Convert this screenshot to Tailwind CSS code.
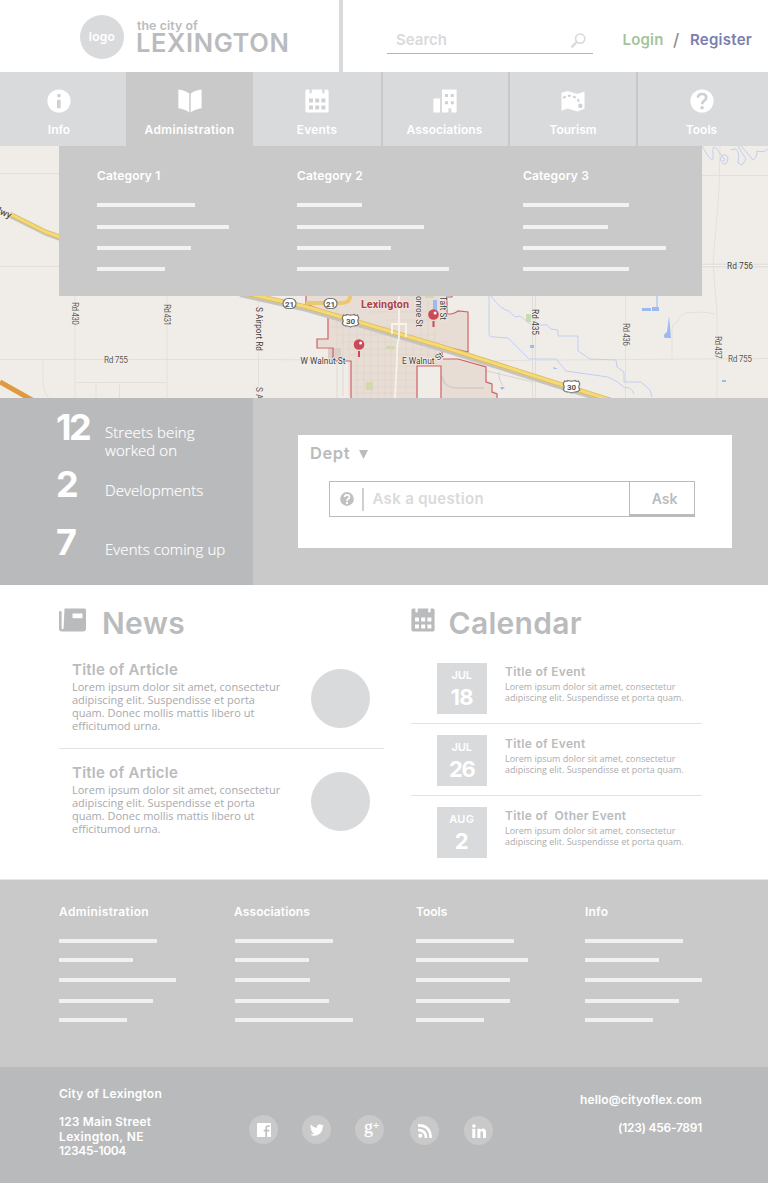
<!DOCTYPE html>
<html lang="en">
<head>
<meta charset="utf-8">
<title>City of Lexington</title>
<script src="https://cdn.jsdelivr.net/npm/@tailwindcss/browser@4"></script>
</head>
<body class="w-[768px] bg-white font-['Inter','Liberation_Sans',sans-serif] font-semibold text-[#babbbd]">

<header class="flex h-[72px] w-[768px]">
  <div class="flex w-[343px] border-r-4 border-[#d9dadc] pl-20 pt-[15px]">
    <div class="flex size-11 items-center justify-center rounded-full bg-[#d9dadc] pb-px text-[12px] tracking-[.25px] text-white">logo</div>
    <div class="ml-[13px]">
      <div class="mt-1 h-3.5 text-[12.3px] leading-[14px] tracking-[.1px]">the city of</div>
      <div class="-ml-px h-[22px] text-[25.5px] leading-[20px] tracking-[.6px]">LEXINGTON</div>
    </div>
  </div>
  <div class="ml-11 mt-[26px] flex h-7 w-[206px] items-center justify-between border-b border-[#b5b6b8] pl-[9px] pr-[7px] pt-0.5 text-[15px] text-[#d9dadc]">
    <span>Search</span>
    <svg class="size-[15px]" viewBox="0 0 15 15" fill="none" stroke="currentColor"><circle cx="9.2" cy="5.6" r="4.6" stroke-width="1.6"/><path d="M5.6 9.2L1.2 13.6" stroke-width="2.4" stroke-linecap="round"/></svg>
  </div>
  <div class="ml-[29.5px] flex pt-[30px] text-[15px] leading-5">
    <span class="w-[50.5px] tracking-[.2px] text-[#a3c49b]">Login</span>
    <span class="w-[17px] text-[17px] font-medium text-[#8f8f91]">/</span>
    <span class="tracking-[.25px] text-[#7a7eae]">Register</span>
  </div>
</header>

<nav class="grid h-[74px] grid-cols-[126px_127px_130px_127px_128px_130px] text-center text-[12px] leading-4 text-white">
  <a class="flex flex-col items-center gap-[9px] bg-[#d9dadc] pr-2 pt-[17px]">
    <svg class="size-6" viewBox="0 0 24 24"><circle cx="12" cy="12" r="11.6" fill="#fff"/><circle cx="12" cy="6.6" r="1.9" fill="#d0d1d3"/><path d="M10 10.8h3.7v8.4H10z" fill="#d0d1d3"/></svg>
    <span>Info</span>
  </a>
  <a class="flex flex-col items-center gap-[9px] bg-[#c9c9c9] pt-[17px]">
    <svg class="size-6" viewBox="0 0 24 24" fill="#fff"><path d="M.4.4C4 .8 8.400 2 11.300 4.400v19.200C8.400 21 4 19.900.4 19.300zM23.600.4C20 .8 15.600 2 12.700 4.400v19.200c2.900-2.600 7.300-3.700 10.900-4.300z"/></svg>
    <span class="tracking-[.37px]">Administration</span>
  </a>
  <a class="flex flex-col items-center gap-[9px] border-r-2 border-[#c8c8ca] bg-[#d9dadc] pt-[17px]">
    <svg class="size-6" viewBox="0 0 24 24"><path d="M2 .6h2.400v2.600q0 1.200 1.200 1.200T6.800 3.200V.6h10.400v2.600q0 1.200 1.200 1.200t1.200-1.200V.6H22q1.600 0 1.600 1.600v19.600q0 1.600-1.600 1.600H2Q.4 23.400.4 21.800V2.200Q.4.600 2 .6z" fill="#fff"/><path d="M4 9.500h4v4H4zm6.200 0h4v4h-4zm6.200 0h4v4h-4zM4 16.500h4v4H4zm6.200 0h4v4h-4zm6.200 0h4v4h-4z" fill="#d0d1d3"/></svg>
    <span class="tracking-[.2px]">Events</span>
  </a>
  <a class="flex flex-col items-center gap-[9px] border-r-2 border-[#c8c8ca] bg-[#d9dadc] pr-0.5 pt-[17px]">
    <svg class="size-6" viewBox="0 0 24 24"><path d="M.4 9.500h6.600v14H.4zM9 .5h14.600v23h-5.200v-4.200h-3v4.200H9z" fill="#fff"/><path d="M12 5h3v3h-3zm5.800 0h3v3h-3zM12 12.300h3v3h-3zm5.800 0h3v3h-3z" fill="#d0d1d3"/></svg>
    <span class="tracking-[.1px]">Associations</span>
  </a>
  <a class="flex flex-col items-center gap-[9px] border-r-2 border-[#c8c8ca] bg-[#d9dadc] pt-[17px]">
    <svg class="size-6" viewBox="0 0 24 24"><path d="M.5 3.800L6.500 2l10 3 7-2.600v17.400l-7 2.700-10-2.900-6 2.200z" fill="#fff"/><path d="M2 9q6-4 12-.7 4.500 2.700 5 8" fill="none" stroke="#cfd0d2" stroke-width="2" stroke-dasharray="3 2.200"/><circle cx="19.400" cy="16.900" r="2.200" fill="#cfd0d2"/></svg>
    <span>Tourism</span>
  </a>
  <a class="flex flex-col items-center gap-[9px] bg-[#d9dadc] pr-[3px] pt-[17px]">
    <svg class="size-6" viewBox="0 0 24 24"><circle cx="12" cy="12" r="11.600" fill="#fff"/><path d="M8 8.700Q8 5 12.200 5q4 0 4 3.600 0 2-2.300 3.400-1.700 1-1.700 3.300" fill="none" stroke="#cfd0d2" stroke-width="2.700"/><circle cx="12.100" cy="18.700" r="1.800" fill="#cfd0d2"/></svg>
    <span>Tools</span>
  </a>
</nav>

<section class="relative h-[252px]">
  <svg class="block h-[252px] w-[768px]" viewBox="0 146 768 252" font-family="Roboto, sans-serif" font-weight="400">
    <rect y="146" width="768" height="252" fill="#f0ede8"/>
    <!-- minor roads -->
    <g fill="none" stroke="#e3e0da">
      <path d="M0 173.500H60M0 266.500H60M0 359.500H260L500 361M700 175.500H768M500 360.500L768 358.500M75 290v108M167 290v108M258.500 290v108M75 382.500h92M43 360v22q1 12 6 16M96 383v15M119.500 384v14M625.500 290v108M720 146l-1 45-6 72 4 50v85M672 360v-30q0-6 5-8 2-6 8-9 18-2 30 1"/>
    </g>
    <path d="M700 265.500h68M534 290v108" fill="none" stroke="#dcd9d4" stroke-width="3.500"/>
    <path d="M700 265.500h68M534 290v108" fill="none" stroke="#f4f2ee" stroke-width="1.500"/>
    <!-- city area -->
    <path d="M306 290V304L328 313V339H317V347H333V357L336 360H351V398H417V366H441V398H497V392L491 390V382L486 380V366L460 359H443V347L467 353V313L457 311Q450 315 447 314V290z" fill="#e8ddd5"/>
    <g stroke="#ded1c9" stroke-width=".7" fill="none">
      <path d="M337 300v98M343 312v84M349 318v78M357 320v78M364 322v76M371 324v74M378 326v72M385 328v70M391 330v66M406 330v60M413 333v30M421 300v60M428 300v62M435 300v65M330 327h65M334 335h102M340 342h110M345 349h96M350 355h90M355 366h60M355 373h60M355 380h60M355 387h60M355 393h60M370 312h70M385 320h50"/>
    </g>
    <path d="M328 348h13v11h-13z" fill="#d9cfc7"/>
    <path d="M366 382h7v8h-7zM386 346h9v3h-9zM425 295h9v3h-9z" fill="#d2d9b0"/>
    <path d="M526 314h5v8h-5z" fill="#c9dcb0"/>
    <path d="M442 376q2 12 15 12h27" fill="none" stroke="#d3cac5" stroke-width="1.500"/>
    <path d="M487 371l46 11M499 372q-1 8 4 14" fill="none" stroke="#d6d2cc"/>
    <!-- water -->
    <g fill="none" stroke="#c4cdf2">
      <path d="M489 290v44q0 3 5 3l14 1 21 21h27l10 12 42 6q10 4 17 11 6-2 9 6M491 296q10 14 18 15l6 6 5-1 12 9h15l4 4 7 1v6h20v15l12 8 26 1 1 7 7 5v10h17l9 8 2 7"/>
      <path d="M702 146l6 10q6 8 5-1-1-11 3-7l9 12q-6 4-4-3 5-5 7 1-1 9-6 5M731 150q10-5 7 13l4 2 4-6-7-11q-2-6 4 0l10 12q4-2 4-9 7 2 11-2"/>
    </g>
    <path d="M642 308h9v3h-9zm10-1h7v4h-7zm4.500-12h1v15h-1zM669 316l2 22h-6q-3-3 2-6zM530 345h4v3h-4zM553 367l5 2h-4zM500 387h5l-3 3zM722 380h4v2h-4zM433 300h4v14h-4z" fill="#9cb9f2"/>
    <!-- city limits -->
    <path d="M306 290v14l22 9v26h-11v9h16v10l3 3h15v37M447 290v7h5v-2M447 297v17h4q5-1 7-3l10 1v40l-26-6v12M417 398v-32h24v32M443 359h15l28 8v15l6 2v8l5 2v6" fill="none" stroke="#cf6064" stroke-width="1.200"/>
    <!-- highways -->
    <path d="M10 216l36 18 20 7M240 295l67 15 133 39 110 35 70 22" fill="none" stroke="#c6c4c0" stroke-width="4"/>
    <path d="M306 303h30q14 1 14-6v-7" fill="none" stroke="#eac873" stroke-width="4"/>
    <path d="M10 214l36 18 20 7M240 292l67 15 133 39 110 35 70 22" fill="none" stroke="#dcbb59" stroke-width="4.600"/>
    <path d="M10 214l36 18 20 7M240 292l67 15 133 39 110 35 70 22" fill="none" stroke="#f5d977" stroke-width="3"/>
    <path d="M0 382l32 18" fill="none" stroke="#df9a3f" stroke-width="5"/>
    <path d="M399 290v48q-2 4-2 20l-2 40M392 334v-10h14v13" fill="none" stroke="#f7f3ef" stroke-width="1.800"/>
    <!-- route shields -->
    <g fill="#fff" stroke="#777" stroke-width="1.200">
      <rect x="283" y="298.500" width="13" height="10" rx="5"/>
      <rect x="324" y="298.500" width="13" height="10" rx="5"/>
      <path id="shield" d="M343.500 315q2.200 1 3.500-.5 3.500 1.300 7 0 1.300 1.500 3.500.5l1.300 3q-2 3 0 5.500-1.300 2.500-5 2.500-2 .2-3.300 1-1.300-.8-3.300-1-3.700 0-5-2.500 2-2.500 0-5.500z"/>
      <use href="#shield" x="221" y="66"/>
    </g>
    <g font-size="8" fill="#555" text-anchor="middle" font-weight="700">
      <text x="289.600" y="306.500">21</text><text x="330.500" y="306.500">21</text><text x="350.500" y="323.700">30</text><text x="571.500" y="389.700">30</text>
    </g>
    <!-- labels -->
    <g font-size="8.300" fill="#5c5956" stroke="#f5f2ee" stroke-width="1.200" paint-order="stroke">
      <text x="104" y="362.500" textLength="24">Rd 755</text>
      <text x="727" y="268.500" textLength="26" fill="#3e3c39">Rd 756</text>
      <text x="728" y="362" textLength="24">Rd 755</text>
      <text x="300.500" y="364" textLength="45" fill="#3e3c39">W Walnut St</text>
      <text x="402" y="364" textLength="32.500" fill="#3e3c39">E Walnut</text>
      <text transform="translate(438 361) rotate(-40)" fill="#3e3c39">St</text>
      <text transform="translate(72 302) rotate(90)" textLength="23">Rd 430</text>
      <text transform="translate(164 304) rotate(90)" textLength="22">Rd 431</text>
      <text transform="translate(255.500 307) rotate(90)" textLength="44" fill="#3e3c39">S Airport Rd</text>
      <text transform="translate(255.500 387) rotate(90)">S A</text>
      <text transform="translate(531.500 309) rotate(90)" textLength="26" fill="#3e3c39">Rd 435</text>
      <text transform="translate(623 323) rotate(90)" textLength="23">Rd 436</text>
      <text transform="translate(714.500 336) rotate(90)" textLength="23">Rd 437</text>
      <text transform="translate(416 296) rotate(90)" textLength="31" fill="#3e3c39">onroe St</text>
      <text transform="translate(439.500 296) rotate(90)" textLength="24" fill="#3e3c39">Taft St</text>
      <text transform="translate(-3 213) rotate(24)" fill="#5e4a2a" font-size="9.500" font-weight="500">lwy</text>
    </g>
    <text x="361" y="308" font-size="10.800" font-weight="700" fill="#ac4248" textLength="48" stroke="#f3e8e2" stroke-width="1.500" paint-order="stroke">Lexington</text>
    <!-- pins -->
    <g fill="#ca4b55"><circle cx="359" cy="344.500" r="5.300"/><path d="M358 351h2v6h-2z"/><circle cx="433.500" cy="314.500" r="5.300"/><path d="M432.500 321h2v6h-2z"/></g>
    <g fill="#fff"><circle cx="360.600" cy="343" r="1.500"/><circle cx="435.100" cy="313" r="1.500"/></g>
  </svg>

  <div class="absolute left-[59px] top-0 flex h-[150px] w-[643px] bg-[#c9c9c9] pl-[38px] pt-[22px] text-[12px] leading-4 tracking-[.15px] text-white">
    <div class="w-[200px]">
      <div>Category 1</div>
      <div class="mt-[19px] h-1 w-[98px] bg-[#f2f2f2]"></div>
      <div class="mt-[18px] h-1 w-[132px] bg-[#f2f2f2]"></div>
      <div class="mt-[17px] h-1 w-[94px] bg-[#f2f2f2]"></div>
      <div class="mt-[17px] h-1 w-[68px] bg-[#f2f2f2]"></div>
    </div>
    <div class="w-[226px]">
      <div>Category 2</div>
      <div class="mt-[19px] h-1 w-[65px] bg-[#f2f2f2]"></div>
      <div class="mt-[18px] h-1 w-[127px] bg-[#f2f2f2]"></div>
      <div class="mt-[17px] h-1 w-[94px] bg-[#f2f2f2]"></div>
      <div class="mt-[17px] h-1 w-[152px] bg-[#f2f2f2]"></div>
    </div>
    <div>
      <div>Category 3</div>
      <div class="mt-[19px] h-1 w-[106px] bg-[#f2f2f2]"></div>
      <div class="mt-[18px] h-1 w-[85px] bg-[#f2f2f2]"></div>
      <div class="mt-[17px] h-1 w-[143px] bg-[#f2f2f2]"></div>
      <div class="mt-[17px] h-1 w-[106px] bg-[#f2f2f2]"></div>
    </div>
  </div>
</section>

<section class="flex h-[187px] bg-[#c9c9c9]">
  <div class="w-[253px] bg-[#b9babc] pl-14 text-white">
    <div class="flex h-[68px] pt-[13px]">
      <div class="w-[49px] text-[36px] font-bold leading-8 tracking-[-2.500px]">12</div>
      <div class="pt-[12px] font-['Open_Sans'] text-[15px] font-light leading-[18px] tracking-[.08px] [-webkit-text-stroke:.2px_white]">Streets being<br>worked on</div>
    </div>
    <div class="flex h-[58px] pt-[2px]">
      <div class="w-[49px] text-[36px] font-bold leading-8">2</div>
      <div class="pt-[13px] font-['Open_Sans'] text-[15px] font-light leading-[18px] tracking-[.08px] [-webkit-text-stroke:.2px_white]">Developments</div>
    </div>
    <div class="flex pt-[2px]">
      <div class="w-[49px] text-[36px] font-bold leading-8">7</div>
      <div class="pt-[14px] font-['Open_Sans'] text-[15px] font-light leading-[18px] tracking-[.08px] [-webkit-text-stroke:.2px_white]">Events coming up</div>
    </div>
  </div>
  <div class="ml-[45px] mt-[37px] h-[113px] w-[434px] bg-white pl-3 pt-2">
    <div class="flex h-5 items-center gap-[9px] text-[16.500px] tracking-[.6px]">Dept
      <svg class="mt-0.5 h-[9px] w-[9px]" viewBox="0 0 8 8"><path d="M0 0h8L4 8z" fill="#babbbd"/></svg>
    </div>
    <div class="ml-[19px] mt-[18px] flex h-9 w-[366px] border border-[#babbbd] text-[15px]">
      <div class="flex w-[299px] items-center pl-2.5">
        <svg class="size-[14px]" viewBox="0 0 24 24"><circle cx="12" cy="12" r="11.800" fill="#c0c0c2"/><path d="M8 8.700Q8 5 12.200 5q4 0 4 3.600 0 2-2.300 3.400-1.700 1-1.700 3.300" fill="none" stroke="#fff" stroke-width="3"/><circle cx="12.100" cy="18.700" r="2" fill="#fff"/></svg>
        <div class="ml-2 h-[23px] w-[1.500px] bg-[#cfd0d2]"></div>
        <span class="ml-[9px] tracking-[.32px] text-[#d9dadc]">Ask a question</span>
      </div>
      <div class="flex flex-1 items-center justify-center border-b-2 border-l border-[#babbbd] pl-[5px] pt-px text-[14px]">Ask</div>
    </div>
  </div>
</section>

<section class="flex h-[294px] pl-[59px]">
  <div class="w-[325px]">
    <div class="flex h-[70px] pt-[23px]">
      <svg class="h-6 w-[27px]" viewBox="0 0 27 24"><path d="M5.500.5h20q1.500 0 1.500 1.500v18.500q0 3-3 3H3q-3 0-3-3V4q0-1 1.300-1t1.300 1v16q0 1.200 1 1.200t1-1.200z" fill="#babbbd"/><path d="M13.500 5.500h10v4.700h-10z" fill="#fff"/></svg>
      <h2 class="ml-4 h-7 text-[30px] leading-[30px] tracking-[.3px]">News</h2>
    </div>
    <article class="flex h-[94px] border-b border-[#e2e3e4] pl-[13px] pt-[6px]">
      <div class="w-[238.500px]">
        <h3 class="h-[19px] text-[15px] leading-[18px] tracking-[.23px]">Title of Article</h3>
        <p class="font-['Open_Sans'] text-[11px] font-normal leading-[13px] text-[#a9a9ab]">Lorem ipsum dolor sit amet, consectetur<br>adipiscing elit. Suspendisse et porta<br>quam. Donec mollis mattis libero ut<br>efficitumod urna.</p>
      </div>
      <div class="mt-2 size-[59px] rounded-full bg-[#d9dadc]"></div>
    </article>
    <article class="flex pl-[13px] pt-[15px]">
      <div class="w-[238.500px]">
        <h3 class="h-[19px] text-[15px] leading-[18px] tracking-[.23px]">Title of Article</h3>
        <p class="font-['Open_Sans'] text-[11px] font-normal leading-[13px] text-[#a9a9ab]">Lorem ipsum dolor sit amet, consectetur<br>adipiscing elit. Suspendisse et porta<br>quam. Donec mollis mattis libero ut<br>efficitumod urna.</p>
      </div>
      <div class="mt-2 size-[59px] rounded-full bg-[#d9dadc]"></div>
    </article>
  </div>

  <div class="ml-[26.500px] w-[291.500px]">
    <div class="flex h-[67px] pt-[23px]">
      <svg class="size-6" viewBox="0 0 24 24"><path d="M2 .6h2.400v2.600q0 1.200 1.200 1.200T6.800 3.200V.6h10.400v2.600q0 1.200 1.200 1.200t1.200-1.200V.6H22q1.600 0 1.600 1.600v19.600q0 1.600-1.600 1.600H2Q.4 23.400.4 21.800V2.200Q.4.600 2 .6z" fill="#babbbd"/><path d="M4 9.500h4v4H4zm6.200 0h4v4h-4zm6.200 0h4v4h-4zM4 16.500h4v4H4zm6.200 0h4v4h-4zm6.200 0h4v4h-4z" fill="#fff"/></svg>
      <h2 class="ml-[14px] h-7 text-[30px] leading-[30px] tracking-[.3px]">Calendar</h2>
    </div>
    <article class="flex h-[72px] border-b border-[#e2e3e4] pl-[26px] pt-[11px]">
      <div class="size-[50.500px] bg-[#d9dadc] pt-[5px] text-center text-white">
        <div class="text-[11px] leading-[14px]">JUL</div>
        <div class="mt-[3px] text-[22px] font-bold leading-6 tracking-[-.7px]">18</div>
      </div>
      <div class="ml-[18px] pt-px">
        <h3 class="h-[18px] text-[12px] leading-4 tracking-[.3px]">Title of Event</h3>
        <p class="-mt-px font-['Open_Sans'] text-[9px] font-normal leading-[11px] text-[#acacae]">Lorem ipsum dolor sit amet, consectetur<br>adipiscing elit. Suspendisse et porta quam.</p>
      </div>
    </article>
    <article class="flex h-[72px] border-b border-[#e2e3e4] pl-[26px] pt-[11px]">
      <div class="size-[50.500px] bg-[#d9dadc] pt-[5px] text-center text-white">
        <div class="text-[11px] leading-[14px]">JUL</div>
        <div class="mt-[3px] text-[22px] font-bold leading-6 tracking-[-1.200px]">26</div>
      </div>
      <div class="ml-[18px] pt-px">
        <h3 class="h-[18px] text-[12px] leading-4 tracking-[.3px]">Title of Event</h3>
        <p class="-mt-px font-['Open_Sans'] text-[9px] font-normal leading-[11px] text-[#acacae]">Lorem ipsum dolor sit amet, consectetur<br>adipiscing elit. Suspendisse et porta quam.</p>
      </div>
    </article>
    <article class="flex h-[72px] pl-[26px] pt-[11px]">
      <div class="size-[50.500px] bg-[#d9dadc] pt-[5px] text-center text-white">
        <div class="text-[11px] leading-[14px] tracking-[.29px]">AUG</div>
        <div class="mt-[3px] text-[22px] font-bold leading-6">2</div>
      </div>
      <div class="ml-[18px] pt-px">
        <h3 class="h-[18px] whitespace-pre text-[12px] leading-4 tracking-[.3px]">Title of  Other Event</h3>
        <p class="-mt-px font-['Open_Sans'] text-[9px] font-normal leading-[11px] text-[#acacae]">Lorem ipsum dolor sit amet, consectetur<br>adipiscing elit. Suspendisse et porta quam.</p>
      </div>
    </article>
  </div>
</section>

<footer>
  <div class="flex h-[188px] border-t border-[#e6e6e6] bg-[#c9c9c9] pl-[59px] pt-6 text-[12px] leading-4 text-white">
    <div class="w-[175px]">
      <div class="tracking-[.37px]">Administration</div>
      <div class="mt-[19px] h-1 w-[98px] bg-[#f0f0f0]"></div>
      <div class="mt-[15px] h-1 w-[74px] bg-[#f0f0f0]"></div>
      <div class="mt-4 h-1 w-[117px] bg-[#f0f0f0]"></div>
      <div class="mt-[17px] h-1 w-[94px] bg-[#f0f0f0]"></div>
      <div class="mt-[15px] h-1 w-[68px] bg-[#f0f0f0]"></div>
    </div>
    <div class="w-[182px]">
      <div class="tracking-[.1px]">Associations</div>
      <div class="ml-px mt-[19px] h-1 w-[98px] bg-[#f0f0f0]"></div>
      <div class="ml-px mt-[15px] h-1 w-[74px] bg-[#f0f0f0]"></div>
      <div class="ml-px mt-4 h-1 w-[75px] bg-[#f0f0f0]"></div>
      <div class="ml-px mt-[17px] h-1 w-[94px] bg-[#f0f0f0]"></div>
      <div class="ml-px mt-[15px] h-1 w-[118px] bg-[#f0f0f0]"></div>
    </div>
    <div class="w-[169px]">
      <div>Tools</div>
      <div class="mt-[19px] h-1 w-[98px] bg-[#f0f0f0]"></div>
      <div class="mt-[15px] h-1 w-[112px] bg-[#f0f0f0]"></div>
      <div class="mt-4 h-1 w-[94px] bg-[#f0f0f0]"></div>
      <div class="mt-[17px] h-1 w-[94px] bg-[#f0f0f0]"></div>
      <div class="mt-[15px] h-1 w-[68px] bg-[#f0f0f0]"></div>
    </div>
    <div>
      <div class="tracking-[.2px]">Info</div>
      <div class="mt-[19px] h-1 w-[98px] bg-[#f0f0f0]"></div>
      <div class="mt-[15px] h-1 w-[74px] bg-[#f0f0f0]"></div>
      <div class="mt-4 h-1 w-[117px] bg-[#f0f0f0]"></div>
      <div class="mt-[17px] h-1 w-[94px] bg-[#f0f0f0]"></div>
      <div class="mt-[15px] h-1 w-[68px] bg-[#f0f0f0]"></div>
    </div>
  </div>

  <div class="flex h-[116px] bg-[#b9babc] pl-[59px] pr-[66px] pt-5 text-[12px] leading-[14.500px] text-white">
    <div class="w-[190px] whitespace-nowrap">
      <div class="tracking-[.25px]">City of Lexington</div>
      <div class="mt-[13.500px] tracking-[.16px]">123 Main Street</div>
      <div class="tracking-[.35px]">Lexington, NE</div>
      <div class="tracking-[-.32px]">12345-1004</div>
    </div>
    <div class="flex pt-7">
      <div class="flex size-[29px] items-center justify-center rounded-full bg-[#c9c9c9]">
        <svg class="size-3.5" viewBox="0 0 14 14"><rect width="14" height="14" rx=".6" fill="#fff"/><path d="M9.200 14V5.300q0-2.300 2.100-2.300h1.500M6.700 7.600h5.600" fill="none" stroke="#bfbfbf" stroke-width="1.700"/></svg>
      </div>
      <div class="ml-6 flex size-[29px] items-center justify-center rounded-full bg-[#c9c9c9] pl-px">
        <svg class="size-[14px]" viewBox="0 0 24 24" fill="#fff"><path d="M24 4.600a10 10 0 0 1-2.800.8 5 5 0 0 0 2.100-2.700 10 10 0 0 1-3.100 1.200 4.900 4.900 0 0 0-8.400 4.500A14 14 0 0 1 1.700 3.100 4.900 4.900 0 0 0 3.200 9.700 5 5 0 0 1 1 9.100a4.900 4.900 0 0 0 3.900 4.900 5 5 0 0 1-2.200.1 4.900 4.900 0 0 0 4.600 3.400A9.900 9.900 0 0 1 0 19.500a14 14 0 0 0 21.500-12.400A10 10 0 0 0 24 4.600z"/></svg>
      </div>
      <div class="ml-6 flex size-[29px] justify-center rounded-full bg-[#c9c9c9] pl-1 font-['Liberation_Serif',serif] font-normal [-webkit-text-stroke:.3px_white]">
        <span class="text-[18px] leading-[24px]">g</span><span class="text-[11px] leading-[21px]">+</span>
      </div>
      <div class="ml-[26px] mt-px flex size-[29px] items-center justify-center rounded-full bg-[#c9c9c9]">
        <svg class="size-3.5" viewBox="0 0 14 14"><circle cx="2.300" cy="11.700" r="2.100" fill="#fff"/><path d="M0 6q8 0 8 8M0 1.400q12.600 0 12.600 12.600" fill="none" stroke="#fff" stroke-width="2.600"/></svg>
      </div>
      <div class="ml-[25px] mt-px flex size-[29px] items-center justify-center rounded-full bg-[#c9c9c9] pl-px">
        <svg class="size-3.5" viewBox="0 0 14 14" fill="#fff"><circle cx="1.900" cy="2" r="1.800"/><path d="M.3 4.800h3V14h-3zM5.400 4.800h2.900v1.300q.9-1.500 2.700-1.500 3 0 3 3.500V14h-3V8.900q0-1.900-1.200-1.900-1.400 0-1.400 2V14h-3z"/></svg>
      </div>
    </div>
    <div class="ml-auto pt-1.5 text-right">
      <div class="tracking-[.15px]">hello@cityoflex.com</div>
      <div class="mt-[13.500px] tracking-[-.27px]">(123) 456-7891</div>
    </div>
  </div>
</footer>
</body>
</html>
